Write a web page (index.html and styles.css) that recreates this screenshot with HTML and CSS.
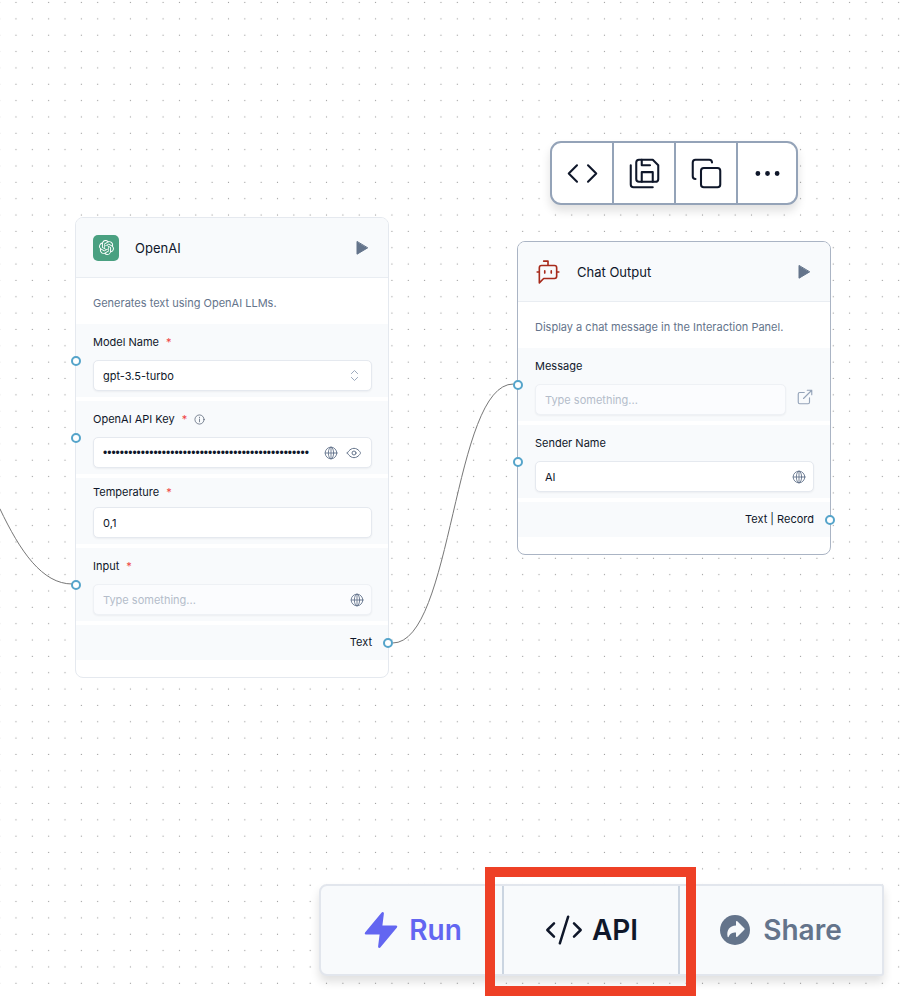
FILE: index.html
```html
<!DOCTYPE html>
<html lang="en">
<head>
<meta charset="utf-8">
<title>Flow editor</title>
<link rel="stylesheet" href="styles.css">
</head>
<body>
<svg class="defs" aria-hidden="true">
  <symbol id="globe" viewBox="0 0 24 24"><circle cx="12" cy="12" r="10"/><ellipse cx="12" cy="12" rx="4.5" ry="10"/><path d="M2 12h20M12 2v20"/></symbol>
  <symbol id="play" viewBox="0 0 12 14"><path d="M1 .8v12.4L11.400 7z"/></symbol>
</svg>
<main class="canvas">
  <svg class="backdrop" aria-hidden="true">
    <defs>
      <pattern id="dots" x="7.800" y="-5.600" width="16.346" height="16.346" patternUnits="userSpaceOnUse"><circle cx="8.170" cy="8.170" r=".6"/></pattern>
    </defs>
    <rect class="dots" width="100%" height="100%" fill="url(#dots)"/>
    <path class="edge" d="M0 509C20 551 42 584 72 584"/>
    <path class="edge" d="M393 643C453 643 453 384 513 384"/>
  </svg>

  <article class="node node-openai">
    <header class="node-head">
      <span class="brand"><svg viewBox="0 0 24 24"><path d="M22.282 9.821a5.985 5.985 0 0 0-.516-4.910 6.046 6.046 0 0 0-6.510-2.900A6.065 6.065 0 0 0 4.981 4.182a5.985 5.985 0 0 0-3.998 2.900 6.046 6.046 0 0 0 .743 7.097 5.980 5.980 0 0 0 .510 4.911 6.051 6.051 0 0 0 6.515 2.900A5.985 5.985 0 0 0 13.260 24a6.056 6.056 0 0 0 5.772-4.206 5.990 5.990 0 0 0 3.998-2.900 6.056 6.056 0 0 0-.748-7.073zM13.260 22.430a4.476 4.476 0 0 1-2.876-1.041l.141-.080 4.779-2.758a.795.795 0 0 0 .392-.681v-6.737l2.020 1.169a.071.071 0 0 1 .038.052v5.583a4.504 4.504 0 0 1-4.494 4.493zM3.600 18.304a4.470 4.470 0 0 1-.535-3.014l.142.085 4.783 2.759a.771.771 0 0 0 .780 0l5.843-3.369v2.332a.080.080 0 0 1-.033.062L9.740 19.950a4.500 4.500 0 0 1-6.140-1.646zM2.341 7.896a4.485 4.485 0 0 1 2.365-1.973V11.600a.766.766 0 0 0 .388.677l5.815 3.354-2.020 1.169a.076.076 0 0 1-.071 0l-4.830-2.787A4.504 4.504 0 0 1 2.341 7.872zm16.596 3.856-5.833-3.388L15.119 7.200a.076.076 0 0 1 .071 0l4.830 2.791a4.494 4.494 0 0 1-.676 8.105v-5.678a.790.790 0 0 0-.407-.666zm2.010-3.023-.141-.085-4.774-2.782a.776.776 0 0 0-.785 0L9.409 9.230V6.897a.066.066 0 0 1 .028-.061l4.830-2.787a4.499 4.499 0 0 1 6.680 4.660zM8.307 12.863l-2.020-1.164a.080.080 0 0 1-.038-.057V6.075a4.499 4.499 0 0 1 7.376-3.454l-.142.081-4.778 2.758a.795.795 0 0 0-.393.682zm1.097-2.366 2.602-1.500 2.607 1.500v2.999l-2.597 1.500-2.607-1.500z"/></svg></span>
      <h2>OpenAI</h2>
      <button class="play" aria-label="Run OpenAI"><svg><use href="#play"/></svg></button>
    </header>
    <p class="desc">Generates text using OpenAI LLMs.</p>
    <section class="row">
      <i class="port in"></i>
      <label for="model">Model Name <b>*</b></label>
      <div class="field">
        <select id="model"><option>gpt-3.5-turbo</option></select>
        <svg class="chev" viewBox="0 0 24 24"><path d="m7 15 5 5 5-5M7 9l5-5 5 5"/></svg>
      </div>
    </section>
    <section class="row">
      <i class="port in"></i>
      <label for="key">OpenAI API Key <b>*</b>
        <svg class="info" viewBox="0 0 24 24"><circle cx="12" cy="12" r="10"/><path d="M12 17v-6M12 7v1"/></svg></label>
      <div class="field">
        <input id="key" class="secret" type="password" value="sk-0000000000000000000000000000000000000000000000">
        <svg class="icon"><use href="#globe"/></svg>
        <svg class="icon eye" viewBox="0 0 24 24"><path d="M2 12s3.500-7 10-7 10 7 10 7-3.500 7-10 7-10-7-10-7Z"/><circle cx="12" cy="12" r="3"/></svg>
      </div>
    </section>
    <section class="row compact">
      <label for="temp">Temperature <b>*</b></label>
      <div class="field"><input id="temp" type="text" value="0,1"></div>
    </section>
    <section class="row">
      <i class="port in"></i>
      <label for="input">Input <b>*</b></label>
      <div class="field linked">
        <input id="input" type="text" placeholder="Type something...">
        <svg class="icon"><use href="#globe"/></svg>
      </div>
    </section>
    <footer class="output">Text<i class="port out"></i></footer>
  </article>

  <div class="toolbar" role="toolbar">
    <button aria-label="Code"><svg viewBox="0 0 24 24"><path d="m16 18 6-6-6-6M8 6l-6 6 6 6"/></svg></button>
    <button aria-label="Save"><svg viewBox="0 0 24 24"><path d="M6 4a2 2 0 0 1 2-2h10l4 4v10.200a2 2 0 0 1-2 1.800H8a2 2 0 0 1-2-2Z"/><path d="M10 2v4h6M18 18v-7h-8v7M18 22H4a2 2 0 0 1-2-2V6"/></svg></button>
    <button aria-label="Duplicate"><svg viewBox="0 0 24 24"><rect x="8" y="8" width="14" height="14" rx="2"/><path d="M4 16c-1.100 0-2-.9-2-2V4c0-1.100.9-2 2-2h10c1.100 0 2 .9 2 2"/></svg></button>
    <button aria-label="More"><svg viewBox="0 0 24 24"><g class="solid"><circle cx="5" cy="12" r="1"/><circle cx="12" cy="12" r="1"/><circle cx="19" cy="12" r="1"/></g></svg></button>
  </div>

  <article class="node node-chat">
    <header class="node-head">
      <svg class="bot" viewBox="0 0 24 24"><path d="M12 6V2H8M8 18l-4 4V8a2 2 0 0 1 2-2h12a2 2 0 0 1 2 2v8a2 2 0 0 1-2 2ZM2 12h2M9 11v2M15 11v2M20 12h2"/></svg>
      <h2>Chat Output</h2>
      <button class="play" aria-label="Run Chat Output"><svg><use href="#play"/></svg></button>
    </header>
    <p class="desc">Display a chat message in the Interaction Panel.</p>
    <section class="row">
      <i class="port in"></i>
      <label for="message">Message</label>
      <div class="with-link">
        <div class="field linked"><input id="message" type="text" placeholder="Type something..."></div>
        <svg class="ext" viewBox="0 0 24 24"><path d="M15 3h6v6M10 14 21 3M18 13v6a2 2 0 0 1-2 2H5a2 2 0 0 1-2-2V8a2 2 0 0 1 2-2h6"/></svg>
      </div>
    </section>
    <section class="row">
      <i class="port in"></i>
      <label for="sender">Sender Name</label>
      <div class="field">
        <input id="sender" type="text" value="AI">
        <svg class="icon"><use href="#globe"/></svg>
      </div>
    </section>
    <footer class="output">Text | Record<i class="port out"></i></footer>
  </article>

  <nav class="actions">
    <button class="run"><svg viewBox="0 0 24 24"><path d="M13 2 3 14h9l-1 8 10-12h-9l1-8z"/></svg>Run</button>
    <button class="api"><svg viewBox="0 0 24 24"><path d="m18 16 4-4-4-4M6 8l-4 4 4 4M14.500 4l-5 16"/></svg>API</button>
    <button class="share"><svg viewBox="0 0 30 30"><circle cx="15" cy="15" r="15"/><path d="M16 6.800c0-.8.8-1 1.300-.5l7 7c.5.5.5 1 0 1.500l-7 7c-.5.5-1.300.2-1.300-.5v-3.800c-4 0-6 1-7.300 4.300-.2.500-1 .4-1.100-.1C6.300 15.500 9.500 10.800 16 10.600z"/></svg>Share</button>
    <span class="highlight"></span>
  </nav>
</main>
</body>
</html>
```
FILE: styles.css
```css
* { box-sizing: border-box; }
body { margin: 0; font-family: Inter, "Liberation Sans", sans-serif; color: #0f172a; background: #fff; }
button { font: inherit; color: inherit; border: 0; padding: 0; background: none; cursor: pointer; }
svg { display: block; fill: none; stroke: currentColor; stroke-width: 1.5; stroke-linecap: round; stroke-linejoin: round; flex: none; }
.defs { position: absolute; width: 0; height: 0; }

.canvas { position: relative; min-height: 100vh; overflow: hidden; }
.backdrop { position: absolute; inset: 0; width: 100%; height: 100%; stroke: none; }
.backdrop pattern { fill: #999; }
.edge { stroke: #777; stroke-width: 1; }

.node { position: absolute; width: 314px; padding-bottom: 17px; background: #fff; border: 1px solid #e5e9ef; border-radius: 8px; }
.node-openai { left: 75px; top: 217px; }
.node-chat { left: 517px; top: 241px; border-color: #aab4c4; }
.node-head { display: flex; align-items: center; height: 60px; padding: 0 19px 0 17px; background: #f8fafc; border-bottom: 1px solid #e9edf2; border-radius: 7px 7px 0 0; }
.node-head h2 { flex: 1; margin: 0 0 0 16px; font-size: 13px; font-weight: 400; line-height: 20px; }
.brand { display: grid; place-items: center; width: 26px; height: 26px; border-radius: 5px; background: #4aa081; color: #fff; }
.brand svg { width: 15px; height: 15px; fill: currentColor; stroke: none; }
.bot { width: 26px; height: 26px; color: #a72a1b; }
.play svg { width: 14px; height: 14px; fill: #64748b; stroke: #64748b; stroke-width: 1; }
.desc { margin: 0; height: 46px; padding: 16px 17px 0; font-size: 11px; line-height: 18px; color: #64748b; }

.row { position: relative; padding: 9px 16px 6px 17px; margin-bottom: 4px; background: #f8fafc; }
.row label { display: flex; align-items: center; height: 18px; margin-bottom: 9px; font-size: 11px; line-height: 18px; }
.row b { margin: 0 7px; font-weight: 400; color: #ef4444; }
.row.compact { padding-top: 5px; }
.row.compact label { margin-bottom: 6px; }
.info { width: 11px; height: 11px; color: #475569; }
.field { display: flex; align-items: center; gap: 8px; height: 31px; padding: 0 7px 0 9px; background: #fff; border: 1px solid #e5e9ef; border-radius: 5px; box-shadow: 0 1px 2px rgba(15, 23, 42, .05); }
.field input, .field select { flex: 1; min-width: 0; width: 100%; height: 28px; padding: 0; border: 0; outline: 0; background: none; font: inherit; font-size: 11px; color: inherit; appearance: none; }
.field .secret { font-family: "Liberation Sans", Arial, sans-serif; font-size: 12px; }
.field input::placeholder { color: #b4bdca; opacity: 1; }
.linked { background: #fbfcfe; border-color: #eef1f5; }
.icon { width: 14px; height: 14px; color: #64748b; }
.eye { width: 16px; height: 16px; margin-right: 2px; }
.chev { width: 15px; height: 15px; margin-right: 2px; color: #94a3b8; }
.with-link { display: flex; gap: 10px; }
.with-link .field { flex: 1; }
.ext { width: 18px; height: 18px; margin-top: 4px; color: #94a3b8; }
.output { position: relative; height: 35px; padding-right: 16px; background: #f8fafc; text-align: right; font-size: 11px; line-height: 35px; }
.port { position: absolute; top: 50%; width: 10px; height: 10px; margin-top: -5px; border: 2px solid #55a4ca; border-radius: 50%; background: #fff; }
.port.in { left: -5px; }
.port.out { right: -5px; }

.toolbar { position: absolute; left: 550px; top: 141px; display: grid; grid-template-columns: 60px 62px 62px 60px; height: 64px; border: 2px solid #94a3b8; border-radius: 11px; background: #fff; box-shadow: 0 6px 10px rgba(0, 0, 0, .12); }
.toolbar button { display: grid; place-items: center; }
.toolbar button + button { border-left: 2px solid #94a3b8; }
.toolbar svg { width: 33px; height: 33px; }
.solid { fill: currentColor; }

.actions { position: absolute; right: 22px; bottom: 20px; display: grid; grid-template-columns: 181px 178px 1fr; width: 565px; height: 92px; border: 2px solid #e2e6ed; border-radius: 8px 3px 3px 8px; background: #f8fafc; font-size: 28px; font-weight: 600; box-shadow: 0 6px 10px rgba(0, 0, 0, .12); }
.actions button { display: flex; align-items: center; justify-content: center; gap: 8px; }
.actions svg { width: 40px; height: 40px; }
.run { color: #6366f1; }
.run svg { fill: currentColor; }
.actions .api { border: solid #cbd5e1; border-width: 0 2px; }
.actions .share { gap: 13px; color: #64748b; }
.actions .share svg { width: 30px; height: 30px; fill: #64748b; stroke: none; }
.actions .share path { fill: #f8fafc; }
.highlight { position: absolute; left: 164px; top: -19px; width: 211px; height: 129px; border: 10px solid #ee4026; pointer-events: none; }
```
